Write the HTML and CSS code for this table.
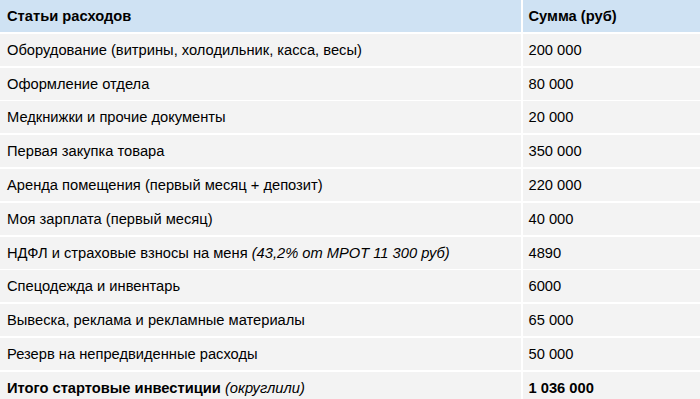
FILE: index.html
```html
<!DOCTYPE html>
<html lang="ru">
<head>
<meta charset="utf-8">
<link rel="stylesheet" href="styles.css">
</head>
<body>
<div class="table">
  <div class="row head"><div class="cell c1"><span>Статьи расходов</span></div><div class="cell c2"><span>Сумма (руб)</span></div></div>
  <div class="row"><div class="cell c1"><span>Оборудование (витрины, холодильник, касса, весы)</span></div><div class="cell c2"><span>200 000</span></div></div>
  <div class="row"><div class="cell c1"><span>Оформление отдела</span></div><div class="cell c2"><span>80 000</span></div></div>
  <div class="row"><div class="cell c1"><span>Медкнижки и прочие документы</span></div><div class="cell c2"><span>20 000</span></div></div>
  <div class="row"><div class="cell c1"><span>Первая закупка товара</span></div><div class="cell c2"><span>350 000</span></div></div>
  <div class="row"><div class="cell c1"><span>Аренда помещения (первый месяц + депозит)</span></div><div class="cell c2"><span>220 000</span></div></div>
  <div class="row"><div class="cell c1"><span>Моя зарплата (первый месяц)</span></div><div class="cell c2"><span>40 000</span></div></div>
  <div class="row"><div class="cell c1"><span>НДФЛ и страховые взносы на меня <i>(43,2% от МРОТ 11 300 руб)</i></span></div><div class="cell c2"><span>4890</span></div></div>
  <div class="row"><div class="cell c1"><span>Спецодежда и инвентарь</span></div><div class="cell c2"><span>6000</span></div></div>
  <div class="row"><div class="cell c1"><span>Вывеска, реклама и рекламные материалы</span></div><div class="cell c2"><span>65 000</span></div></div>
  <div class="row"><div class="cell c1"><span>Резерв на непредвиденные расходы</span></div><div class="cell c2"><span>50 000</span></div></div>
  <div class="row total"><div class="cell c1"><span><b>Итого стартовые инвестиции</b> <i>(округлили)</i></span></div><div class="cell c2"><span><b>1 036 000</b></span></div></div>
</div>
</body>
</html>
```
FILE: styles.css
```css
html, body {
  margin: 0;
  padding: 0;
  background: #ffffff;
}
body {
  font-family: "Liberation Sans", Arial, sans-serif;
  font-size: 14.7px;
  color: #000;
  overflow: hidden;
}
.table {
  display: flex;
  flex-direction: column;
  gap: 1.8px;
  width: 700px;
}
.row {
  display: grid;
  grid-template-columns: 521px 1fr;
  column-gap: 1.5px;
  height: 32px;
}
.cell {
  background: #f3f3f3;
  display: flex;
  align-items: center;
  padding-left: 7px;
  white-space: nowrap;
}
.c2 {
  padding-left: 6px;
}
.head .cell {
  background: #cfe2f3;
  font-weight: bold;
}
```
